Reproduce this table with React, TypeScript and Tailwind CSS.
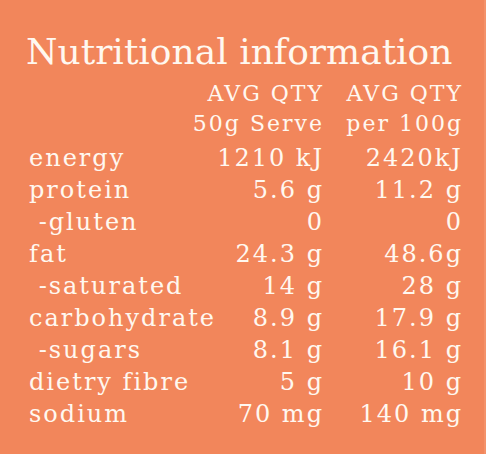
import React from "react";

const rows: [string, string, string][] = [
  ["energy", "1210 kJ", "2420kJ"],
  ["protein", "5.6 g", "11.2 g"],
  ["\u00a0-gluten", "0", "0"],
  ["fat", "24.3 g", "48.6g"],
  ["\u00a0-saturated", "14 g", "28 g"],
  ["carbohydrate", "8.9 g", "17.9 g"],
  ["\u00a0-sugars", "8.1 g", "16.1 g"],
  ["dietry fibre", "5 g", "10 g"],
  ["sodium", "70 mg", "140 mg"],
];

export default function App() {
  return (
    <div
      className="w-[486px] h-[454px] bg-[#f2865b] text-[#fff8f0] overflow-hidden border-r-2 border-[#f4926a]"
      style={{ fontFamily: '"DejaVu Serif", serif' }}
    >
      <div className="pt-[32px] pl-[26px] text-[36px] leading-[40px] whitespace-nowrap">
        Nutritional information
      </div>
      <div className="pl-[29px] pr-[21px] mt-[7px] text-[22px] leading-[30px] tracking-[2px]">
        <div className="flex">
          <div className="flex-1 min-w-0" />
          <div className="w-[140px] text-right whitespace-nowrap">AVG QTY</div>
          <div className="w-[139px] text-right whitespace-nowrap">AVG QTY</div>
        </div>
        <div className="flex">
          <div className="flex-1 min-w-0" />
          <div className="w-[140px] text-right whitespace-nowrap">50g Serve</div>
          <div className="w-[139px] text-right whitespace-nowrap">per 100g</div>
        </div>
        <div className="mt-[3px] text-[24px] leading-[32px]">
          {rows.map(([l, a, b]) => (
            <div key={l} className="flex">
              <div className="flex-1 min-w-0 whitespace-nowrap">{l}</div>
              <div className="w-[120px] text-right whitespace-nowrap">{a}</div>
              <div className="w-[139px] text-right whitespace-nowrap">{b}</div>
            </div>
          ))}
        </div>
      </div>
    </div>
  );
}
